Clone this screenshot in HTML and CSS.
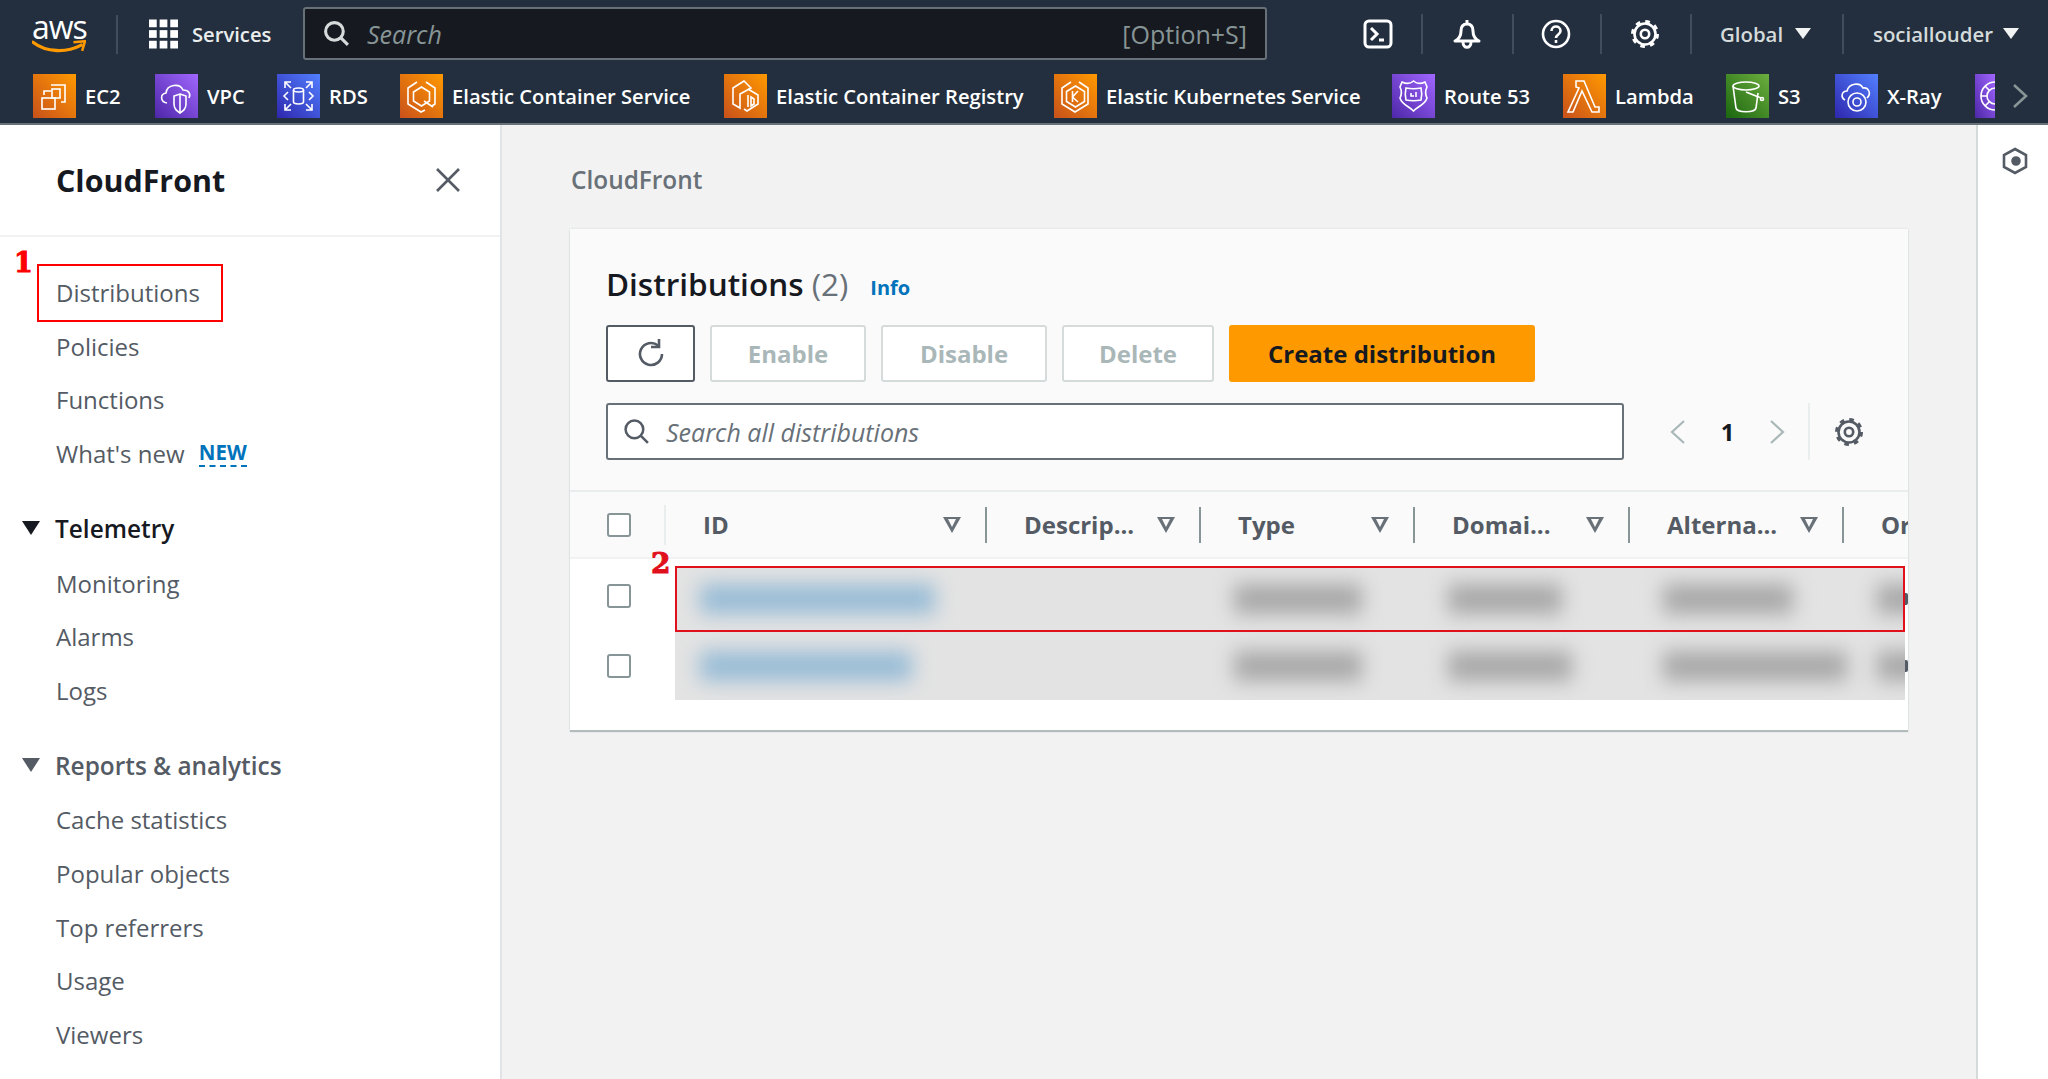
FILE: index.html
```html
<!DOCTYPE html>
<html lang="en">
<head>
<meta charset="utf-8">
<title>CloudFront - Distributions</title>
<link rel="stylesheet" href="styles.css">
</head>
<body>
<svg class="defs" width="0" height="0" aria-hidden="true">
  <defs>
    <linearGradient id="gO" x1="0" y1="1" x2="1" y2="0"><stop offset="0" stop-color="#c8511b"/><stop offset="1" stop-color="#ff9900"/></linearGradient>
    <linearGradient id="gP" x1="0" y1="1" x2="1" y2="0"><stop offset="0" stop-color="#4d27a8"/><stop offset="1" stop-color="#a166ff"/></linearGradient>
    <linearGradient id="gB" x1="0" y1="1" x2="1" y2="0"><stop offset="0" stop-color="#2e27ad"/><stop offset="1" stop-color="#527fff"/></linearGradient>
    <linearGradient id="gG" x1="0" y1="1" x2="1" y2="0"><stop offset="0" stop-color="#1b660f"/><stop offset="1" stop-color="#6cae3e"/></linearGradient>
    <g id="gear" fill="none" stroke="currentColor">
      <circle cx="15" cy="15" r="10.5" stroke-width="2.6"/>
      <circle cx="15" cy="15" r="12.5" stroke-width="3" stroke-dasharray="4.6 5.2"/>
      <circle cx="15" cy="15" r="4.2" stroke-width="2.6"/>
    </g>
  </defs>
</svg>

<header class="topbar">
  <div class="toprow">
    <div class="logo">
      <span class="logo-text">aws</span>
      <svg class="smile" viewBox="0 0 56 14"><path d="M1 2c14 11 35 11 50 3" fill="none" stroke="#f90" stroke-width="3.4" stroke-linecap="round"/><path d="M43 2l12-1-3 10" fill="none" stroke="#f90" stroke-width="2.6"/></svg>
    </div>
    <div class="services">
      <svg class="grid-ic" viewBox="0 0 30 30" fill="#fff">
        <rect x="0" y="0" width="8" height="8"/><rect x="11" y="0" width="8" height="8"/><rect x="22" y="0" width="8" height="8"/>
        <rect x="0" y="11" width="8" height="8"/><rect x="11" y="11" width="8" height="8"/><rect x="22" y="11" width="8" height="8"/>
        <rect x="0" y="22" width="8" height="8"/><rect x="11" y="22" width="8" height="8"/><rect x="22" y="22" width="8" height="8"/>
      </svg>
      <span>Services</span>
    </div>
    <div class="gsearch">
      <svg class="gs-ic" viewBox="0 0 26 26" fill="none" stroke="#d5dbdb" stroke-width="3"><circle cx="11" cy="11" r="8.5"/><path d="M17 17l7 7"/></svg>
      <span class="gs-ph">Search</span>
      <span class="gs-key">[Option+S]</span>
    </div>
    <div class="tcell tc-console">
      <svg class="t-ic" viewBox="0 0 30 30" fill="none" stroke="#fff" stroke-width="3"><rect x="2" y="2" width="26" height="26" rx="4"/><path d="M8 9l6 6-6 6M16 21h5"/></svg>
    </div>
    <div class="tcell tc-bell">
      <svg class="t-ic" viewBox="0 0 30 30" fill="none" stroke="#fff" stroke-width="3" stroke-linejoin="round"><path d="M15 1v4M15 5c-4.500 0-6 3.500-6 7 0 4-2 8-6 10h24c-4-2-6-6-6-10 0-3.500-1.500-7-6-7z"/><path d="M11 23c0 7 8 7 8 0"/></svg>
    </div>
    <div class="tcell tc-help">
      <svg class="t-ic" viewBox="0 0 30 30" fill="none" stroke="#fff" stroke-width="2.600"><circle cx="15" cy="15" r="13"/><path d="M10.500 12c0-6 9-6 9 0 0 3.500-4.500 3.500-4.500 7"/><path d="M15 21v3"/></svg>
    </div>
    <div class="tcell tc-gear">
      <svg class="t-ic" viewBox="0 0 30 30"><use href="#gear"/></svg>
    </div>
    <div class="tcell tc-global"><span>Global</span><i class="caret"></i></div>
    <div class="tcell tc-user"><span>sociallouder</span><i class="caret"></i></div>
  </div>
  <nav class="favs">
    <a class="fav f-ec2"><svg class="fic" viewBox="0 0 43 44"><rect width="43" height="44" fill="url(#gO)"/><g fill="none" stroke="#fff" stroke-width="1.600"><path d="M18 11h14v17h-4"/><path d="M11 21v-4h7"/><rect x="9" y="24" width="13" height="11"/><rect x="19" y="15" width="8" height="9"/></g></svg><span>EC2</span></a>
    <a class="fav f-vpc"><svg class="fic" viewBox="0 0 43 44"><rect width="43" height="44" fill="url(#gP)"/><g fill="none" stroke="#fff" stroke-width="1.600"><path d="M12 29c-7-1-7-9-1-10 1-9 14-10 17-3 6 0 8 4 6 8"/><path d="M25 20l6 2v8c0 5-3 7-6 9-3-2-6-4-6-9v-8z"/><path d="M25 20v19"/></g></svg><span>VPC</span></a>
    <a class="fav f-rds"><svg class="fic" viewBox="0 0 43 44"><rect width="43" height="44" fill="url(#gB)"/><g fill="none" stroke="#fff" stroke-width="1.600"><path d="M8 14V8h6M8 8l6 6M35 14V8h-6M35 8l-6 6M8 30v6h6M8 36l6-6M35 30v6h-6M35 36l-6-6"/><path d="M11 18l-4 4 4 4M32 18l4 4-4 4"/><ellipse cx="21.500" cy="16" rx="5" ry="2"/><path d="M16.500 16v12c0 2.600 10 2.600 10 0V16"/></g></svg><span>RDS</span></a>
    <a class="fav f-ecs"><svg class="fic" viewBox="0 0 43 44"><rect width="43" height="44" fill="url(#gO)"/><g fill="none" stroke="#fff" stroke-width="1.600"><path d="M17 8l-9 6v16l13 8 4-2"/><path d="M26 8l9 6v16l-3 2"/><path d="M21.500 13l8 5v9l-8 5-8-5v-9z"/><path d="M24 27l9 6"/></g></svg><span>Elastic Container Service</span></a>
    <a class="fav f-ecr"><svg class="fic" viewBox="0 0 43 44"><rect width="43" height="44" fill="url(#gO)"/><g fill="none" stroke="#fff" stroke-width="1.600"><path d="M20 7l-11 7v16l7 4V20l11-6z"/><path d="M24 15l10 6v9l-11 7-3-2"/><path d="M24 21v12"/><path d="M27 23l3 2v5l-3 2z"/></g></svg><span>Elastic Container Registry</span></a>
    <a class="fav f-eks"><svg class="fic" viewBox="0 0 43 44"><rect width="43" height="44" fill="url(#gO)"/><g fill="none" stroke="#fff" stroke-width="1.600"><path d="M17 8l-9 6v16l13 8 13-8V14l-9-6"/><path d="M21.500 12l9 5.500v10l-9 5.500-9-5.500v-10z"/><path d="M18.500 17v11M24 17l-5.500 6 5.500 5"/></g></svg><span>Elastic Kubernetes Service</span></a>
    <a class="fav f-r53"><svg class="fic" viewBox="0 0 43 44"><rect width="43" height="44" fill="url(#gP)"/><g fill="none" stroke="#fff" stroke-width="1.600"><path d="M10 8c4 2 8 2 11.500-1 3.500 3 7.500 3 11.500 1l2 5c-2 4-2 7 0 11-2 7-9 8-13.500 13-4.500-5-11.500-6-13.500-13 2-4 2-7 0-11z"/><path d="M14 14c5 1 10 1 15 0 1 4 1 8 0 12-5 1-10 1-15 0-1-4-1-8 0-12z"/><path d="M19 19v3h3M24 18v5"/></g></svg><span>Route 53</span></a>
    <a class="fav f-lam"><svg class="fic" viewBox="0 0 43 44"><rect width="43" height="44" fill="url(#gO)"/><path d="M13 7h8l11 26h4v5h-7L19 17l-9 21H5l11-24-3-1z" fill="none" stroke="#fff" stroke-width="1.600"/></svg><span>Lambda</span></a>
    <a class="fav f-s3"><svg class="fic" viewBox="0 0 43 44"><rect width="43" height="44" fill="url(#gG)"/><g fill="none" stroke="#fff" stroke-width="1.600"><ellipse cx="20" cy="12" rx="13" ry="4"/><path d="M7 12l3 22c1 5 19 5 20 0l2-15"/><path d="M20 18l15 6"/><circle cx="36" cy="25" r="1.500"/></g></svg><span>S3</span></a>
    <a class="fav f-xr"><svg class="fic" viewBox="0 0 43 44"><rect width="43" height="44" fill="url(#gB)"/><g fill="none" stroke="#fff" stroke-width="1.600"><path d="M10 26c-5-3-3-9 2-9 2-8 13-9 16-3 5-1 9 5 4 10"/><circle cx="22" cy="28" r="9"/><circle cx="22" cy="28" r="4"/></g></svg><span>X-Ray</span></a>
    <a class="fav f-part"><svg class="fic-part" viewBox="0 0 20 44"><rect width="20" height="44" fill="url(#gP)"/><g fill="none" stroke="#fff" stroke-width="1.600"><circle cx="20" cy="22" r="14"/><circle cx="20" cy="22" r="8"/><path d="M6 22h6M10 12l5 5M10 32l5-5"/></g></svg></a>
    <svg class="fav-next" viewBox="0 0 16 26" fill="none" stroke="#879596" stroke-width="2.600"><path d="M2 2l12 11L2 24"/></svg>
  </nav>
</header>

<div class="main">
  <aside class="side">
    <div class="side-head">
      <h2 class="side-title">CloudFront</h2>
      <svg class="side-x" viewBox="0 0 24 24" fill="none" stroke="#545b64" stroke-width="2.600"><path d="M1 1l22 22M23 1L1 23"/></svg>
    </div>
    <div class="side-nav">
      <span class="mark-1">1</span>
      <span class="red-box"></span>
      <a class="item">Distributions</a>
      <a class="item">Policies</a>
      <a class="item">Functions</a>
      <a class="item">What's new <span class="new">NEW</span></a>
      <div class="sec sec-dark"><i class="tri"></i>Telemetry</div>
      <a class="item">Monitoring</a>
      <a class="item">Alarms</a>
      <a class="item">Logs</a>
      <div class="sec"><i class="tri"></i>Reports &amp; analytics</div>
      <a class="item">Cache statistics</a>
      <a class="item">Popular objects</a>
      <a class="item">Top referrers</a>
      <a class="item">Usage</a>
      <a class="item">Viewers</a>
    </div>
  </aside>

  <main class="content">
    <div class="crumb">CloudFront</div>
    <section class="card">
      <div class="card-top">
        <div class="title-row">
          <h1 class="h1">Distributions <span class="count">(2)</span></h1>
          <a class="info">Info</a>
        </div>
        <div class="toolbar">
          <button class="btn btn-icon"><svg viewBox="0 0 32 32" width="32" height="32" fill="none" stroke="#545b64" stroke-width="2.600"><path d="M23 7.500A11 11 0 1 0 27 16"/><path d="M24 1v8h-8"/></svg></button>
          <button class="btn b-enable">Enable</button>
          <button class="btn b-disable">Disable</button>
          <button class="btn b-delete">Delete</button>
          <button class="btn btn-primary">Create distribution</button>
        </div>
        <div class="filter-row">
          <div class="filter">
            <svg class="f-ic" viewBox="0 0 26 26" fill="none" stroke="#545b64" stroke-width="2.400"><circle cx="11" cy="11" r="8.500"/><path d="M17 17l7 7"/></svg>
            <span>Search all distributions</span>
          </div>
          <div class="pager">
            <svg class="chev" viewBox="0 0 16 26" fill="none" stroke="#aab7b8" stroke-width="2.200"><path d="M14 2L2 13l12 11"/></svg>
            <span class="page">1</span>
            <svg class="chev" viewBox="0 0 16 26" fill="none" stroke="#aab7b8" stroke-width="2.200"><path d="M2 2l12 11L2 24"/></svg>
          </div>
          <div class="prefs"><svg class="p-ic" viewBox="0 0 30 30"><use href="#gear"/></svg></div>
        </div>
      </div>
      <div class="table">
        <div class="thead">
          <div class="th-check"><i class="cb"></i></div>
          <div class="th th-id"><span>ID</span><i class="ftri"></i></div>
          <div class="th"><span>Descrip...</span><i class="ftri"></i></div>
          <div class="th"><span>Type</span><i class="ftri"></i></div>
          <div class="th"><span>Domai...</span><i class="ftri"></i></div>
          <div class="th"><span>Alterna...</span><i class="ftri"></i></div>
          <div class="th th-last"><span>Or</span></div>
        </div>
        <div class="row row-1">
          <span class="mark-2">2</span>
          <div class="td-check"><i class="cb"></i></div>
          <div class="redact">
            <div class="col col-id"><i class="blur blue w235"></i></div>
            <div class="col"></div>
            <div class="col"><i class="blur w122"></i></div>
            <div class="col"><i class="blur w108"></i></div>
            <div class="col"><i class="blur w125"></i></div>
            <div class="col"><i class="blur w60"></i></div>
            <span class="red-row"></span>
          </div>
          <div class="sliver"><i class="sliver-mark"></i></div>
        </div>
        <div class="row row-2">
          <div class="td-check"><i class="cb"></i></div>
          <div class="redact">
            <div class="col col-id"><i class="blur blue w212"></i></div>
            <div class="col"></div>
            <div class="col"><i class="blur w122"></i></div>
            <div class="col"><i class="blur w118"></i></div>
            <div class="col"><i class="blur w178"></i></div>
            <div class="col"><i class="blur w60"></i></div>
          </div>
          <div class="sliver"><i class="sliver-mark"></i></div>
        </div>
      </div>
    </section>
  </main>

  <aside class="tools">
    <svg class="tools-ic" viewBox="0 0 26 28" fill="none" stroke="#545b64" stroke-width="2.600"><path d="M13 2l11 6v12l-11 6-11-6V8z"/><circle cx="14" cy="14" r="3.500" fill="#545b64"/></svg>
  </aside>
</div>
</body>
</html>
```

FILE: styles.css
```css
* { box-sizing: border-box; }
html, body { margin: 0; padding: 0; }
body {
  width: 2048px;
  height: 1079px;
  overflow: hidden;
  font-family: "Open Sans", "Noto Sans", sans-serif;
  background: #f2f2f2;
  color: #16191f;
}
.defs { position: absolute; }

/* top bar */
.topbar { height: 125px; background: #232f3e; border-bottom: 2px solid #687078; }
.toprow { display: flex; align-items: center; height: 66px; padding-top: 1px; }
.logo { width: 118px; height: 66px; padding-left: 32px; position: relative; flex: none; }
.logo::after { content: ""; position: absolute; right: 0; top: 14px; height: 39px; width: 2px; background: #414d5c; }
.logo-text { display: block; color: #fff; font: 400 32px/30px "Open Sans", sans-serif; letter-spacing: -1px; padding-top: 11px; height: 39px; }
.smile { display: block; width: 54px; height: 14px; }
.services { display: flex; align-items: center; gap: 14px; width: 185px; padding-left: 31px; flex: none; color: #eaeded; font-size: 20.2px; font-weight: 600; }
.grid-ic { width: 29px; height: 30px; flex: none; }
.gsearch { display: flex; align-items: center; width: 964px; height: 53px; flex: none; background: #16191f; border: 2px solid #687078; border-radius: 3px; padding: 0 18px 0 18px; }
.gs-ic { width: 27px; height: 27px; flex: none; }
.gs-ph { margin-left: 17px; color: #879596; font-size: 25px; font-style: italic; }
.gs-key { margin-left: auto; color: #879596; font-size: 25px; }
.tcell { display: flex; align-items: center; justify-content: center; height: 40px; flex: none; position: relative; color: #d5dbdb; font-size: 20.4px; font-weight: 600; }
.tcell + .tcell::before { content: ""; position: absolute; left: 0; top: 0; bottom: 0; width: 2px; background: #414d5c; }
.t-ic { width: 30px; height: 30px; color: #fff; }
.tc-console { width: 154px; padding-left: 68px; }
.tc-bell { width: 91px; }
.tc-help { width: 88px; }
.tc-gear { width: 90px; }
.tc-global { width: 152px; gap: 12px; justify-content: flex-start; padding-left: 30px; }
.tc-user { width: 206px; gap: 10px; justify-content: flex-start; padding-left: 31px; }
.caret { width: 0; height: 0; border-left: 8px solid transparent; border-right: 8px solid transparent; border-top: 11px solid #f2f3f3; }

/* favourites */
.favs { display: flex; align-items: center; height: 57px; padding-left: 33px; padding-top: 2px; color: #fff; font-size: 20.2px; font-weight: 600; overflow: hidden; }
.fav { display: flex; align-items: center; gap: 9px; flex: none; white-space: nowrap; }
.fic { width: 43px; height: 44px; flex: none; }
.fic-part { width: 20px; height: 44px; flex: none; }
.f-ec2 { width: 122px; }
.f-vpc { width: 122px; }
.f-rds { width: 123px; }
.f-ecs { width: 324px; }
.f-ecr { width: 330px; }
.f-eks { width: 338px; }
.f-r53 { width: 171px; }
.f-lam { width: 163px; }
.f-s3 { width: 109px; }
.f-xr { width: 140px; }
.f-part { width: 37px; }
.fav-next { width: 16px; height: 26px; flex: none; }

/* layout */
.main { display: flex; height: 954px; }
.side { width: 502px; flex: none; background: #fff; border-right: 2px solid #e1e4e6; }
.side-head { display: flex; align-items: center; justify-content: space-between; height: 112px; padding: 0 40px 0 56px; border-bottom: 2px solid #f2f2f2; }
.side-title { margin: 0; font-size: 30.4px; font-weight: 700; color: #16191f; }
.side-x { width: 24px; height: 24px; }
.side-nav { position: relative; padding-top: 29px; }
.item { display: flex; align-items: center; height: 53.6px; padding-left: 56px; font-size: 24px; color: #545b64; white-space: pre; }
.new { display: inline-block; margin-left: 8px; font-size: 20.5px; font-weight: 700; color: #0073bb; line-height: 25px; border-bottom: 2px dashed #0073bb; }
.sec { display: flex; align-items: center; height: 54px; margin-top: 21px; margin-bottom: 1px; padding-left: 22px; font-size: 24.4px; font-weight: 600; color: #545b64; }
.sec-dark { color: #16191f; }
.tri { width: 0; height: 0; margin-right: 15px; border-left: 9px solid transparent; border-right: 9px solid transparent; border-top: 14px solid #16191f; }
.sec:not(.sec-dark) .tri { border-top-color: #545b64; }
.red-box { position: absolute; left: 37px; top: 27px; width: 186px; height: 58px; border: 2.5px solid #f00; }
.mark-1 { position: absolute; left: 14px; top: 9px; font: 700 27px/34px "DejaVu Serif", serif; color: #f00; -webkit-text-stroke: 1px #f00; }

/* content */
.content { width: 1474px; flex: none; padding: 38px 68px 0 69px; }
.crumb { font-size: 24.4px; font-weight: 600; color: #687078; line-height: 34px; margin-bottom: 32px; }
.card { width: 1338px; margin-left: -1px; height: 501px; background: #fff; box-shadow: 0 2px 1px #b4bbbd, 0 0 2px #d5dbdb; overflow: hidden; }
.card-top { height: 261px; background: #fafafa; padding: 34px 36px 0; }
.title-row { display: flex; align-items: center; gap: 22px; height: 42px; }
.h1 { margin: 0; font-size: 31.5px; font-weight: 600; line-height: 42px; }
.count { font-weight: 400; color: #687078; }
.info { font-size: 20px; font-weight: 700; color: #0073bb; padding-top: 6px; }
.toolbar { display: flex; margin-top: 20px; gap: 15px; height: 57px; }
.btn { height: 57px; padding: 0; background: #fff; border: 2px solid #d5dbdb; border-radius: 3px; font: 700 24px "Open Sans", sans-serif; color: #aab7b8; }
.btn-icon { display: flex; align-items: center; justify-content: center; width: 89px; border-color: #545b64; }
.b-enable { width: 156px; }
.b-disable { width: 166px; }
.b-delete { width: 152px; }
.btn-primary { width: 306px; background: #f90; border-color: #f90; color: #16191f; }
.filter-row { display: flex; align-items: center; margin-top: 21px; height: 57px; }
.filter { display: flex; align-items: center; width: 1018px; height: 57px; flex: none; background: #fff; border: 2px solid #687078; border-radius: 3px; padding-left: 15px; font-size: 25px; font-style: italic; color: #687078; }
.f-ic { width: 27px; height: 27px; margin-right: 16px; flex: none; }
.pager { display: flex; align-items: center; width: 186px; height: 57px; flex: none; padding-left: 46px; border-right: 2px solid #eaeded; }
.chev { width: 16px; height: 26px; flex: none; }
.page { width: 83px; text-align: center; font-size: 24px; font-weight: 700; color: #16191f; }
.prefs { padding-left: 24px; display: flex; align-items: center; }
.p-ic { width: 30px; height: 30px; color: #545b64; }

/* table */
.table { position: relative; }
.thead { display: grid; grid-template-columns: 96px 321px 214px 214px 215px 214px 1fr; align-items: center; height: 69px; background: #fafafa; border-top: 2px solid #eaeded; border-bottom: 2px solid #f2f2f2; }
.th-check { display: flex; align-items: center; padding-left: 37px; height: 40px; border-right: 2px solid #eaeded; }
.th { display: flex; align-items: center; justify-content: space-between; height: 36px; padding: 0 24px 0 37px; border-right: 2px solid #879596; font-size: 24px; font-weight: 700; color: #545b64; overflow: hidden; white-space: nowrap; }
.th-last { border-right: 0; padding-right: 0; }
.cb { display: block; width: 24px; height: 24px; background: #fff; border: 2px solid #879596; border-radius: 3px; }
.ftri { width: 0; height: 0; flex: none; position: relative; border-left: 9px solid transparent; border-right: 9px solid transparent; border-top: 16px solid #687078; }
.ftri::after { content: ""; position: absolute; left: -4.500px; top: -13.500px; border-left: 4.500px solid transparent; border-right: 4.500px solid transparent; border-top: 8px solid #fafafa; }
.row { display: grid; grid-template-columns: 105px 1230px 3px; background: #fff; }
.row-1 { position: relative; height: 73px; padding-top: 7px; }
.row-1 .td-check { margin-top: -7px; }
.row-2 { height: 68px; }
.td-check { display: flex; align-items: center; padding-left: 37px; }
.redact { position: relative; display: grid; grid-template-columns: 312px 214px 214px 215px 214px 61px; align-items: center; background: #e3e3e3; overflow: hidden; }
.col { padding-left: 33px; }
.col-id { padding-left: 25px; }
.blur { display: block; height: 30px; background: #a8a8a8; filter: blur(10px); }
.blue { background: #98bcd6; }
.w235 { width: 235px; } .w212 { width: 212px; }
.w122 { width: 128px; } .w108 { width: 114px; }
.w118 { width: 124px; } .w125 { width: 130px; }
.w178 { width: 184px; } .w60 { width: 60px; }
.red-row { position: absolute; inset: 0; border: 2.5px solid #e0101c; }
.mark-2 { position: absolute; left: 81px; top: -12px; font: 700 28px/34px "DejaVu Serif", serif; color: #e0101c; -webkit-text-stroke: 1px #e0101c; }
.sliver { display: flex; align-items: center; }
.sliver-mark { display: block; width: 3px; height: 12px; background: #545b64; border-radius: 0 2px 2px 0; }

/* tools panel */
.tools { width: 72px; flex: none; background: #fff; border-left: 2px solid #d5dbdb; padding: 22px 0 0 24px; }
.tools-ic { display: block; width: 26px; height: 28px; }
```
